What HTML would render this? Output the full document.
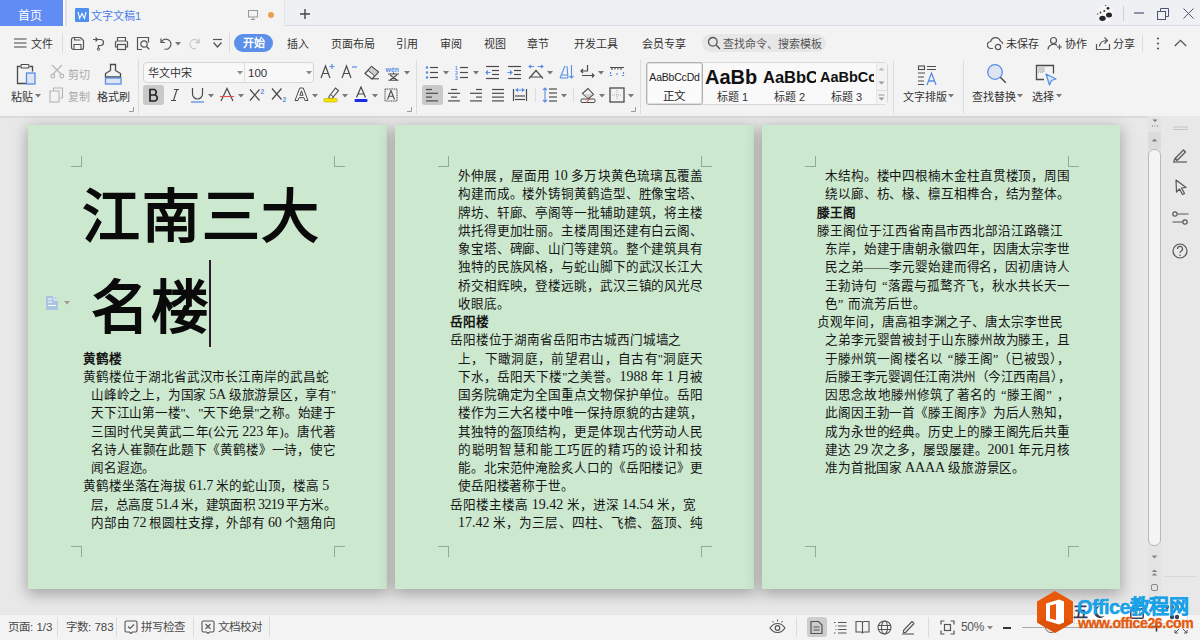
<!DOCTYPE html>
<html lang="zh-CN"><head><meta charset="utf-8">
<style>
*{box-sizing:border-box;margin:0;padding:0}
html,body{width:1200px;height:640px;overflow:hidden;background:#e6e6e6;font-family:"Liberation Sans",sans-serif;color:#333}
.a{position:absolute}
#tabbar{left:0;top:0;width:1200px;height:26px;background:#eef0f4;border-bottom:1px solid #d9dee6}
#home{left:0;top:0;width:63px;height:26px;background:#608cf4;color:#fff;font-size:12px;line-height:32px;text-align:center;padding-right:3px}
#doctab{left:66px;top:0;width:219px;height:27px;background:#f3f3f3;border-left:1px solid #dfe3ea;border-right:1px solid #dfe3ea}
#menurow{left:0;top:26px;width:1200px;height:90px;background:#f3f3f3}
.mi{font-size:11px;line-height:14px;color:#333;white-space:nowrap}
.sep{width:1px;background:#dcdcdc}
#work{left:0;top:116px;width:1148px;height:498px;background:#e8e8e8;border-top:2px solid #dadada}
.page{top:125px;width:359px;height:464px;background:#cce8cf;box-shadow:0 4px 14px 1px rgba(0,0,0,.3)}
.cm{width:11px;height:11px}
#status{left:0;top:613px;width:1200px;height:27px;background:#f3f3f3;border-top:1px solid #e2e2e2}
.st{font-size:11.5px;color:#4a4a4a;line-height:14px;white-space:nowrap}
.txt{font-family:"Liberation Serif",serif;font-size:12.5px;color:#111;white-space:nowrap;line-height:14px}
.ln{position:absolute;white-space:nowrap;text-align:justify;text-align-last:justify}
.hd{font-weight:bold;text-align:left;text-align-last:left}
/*PGCSS*/.ln{position:absolute;white-space:nowrap;text-align:justify;text-align-last:justify;font-family:"Liberation Serif",serif;font-size:12.6px;line-height:18px;height:18px;color:#161616;overflow:visible}
.lf{text-align:left;text-align-last:left}
.d{font-size:14px}
.hd{font-weight:bold;text-align:left;text-align-last:left}
.ttl{font-family:"Liberation Serif",serif;font-size:58px;line-height:72px;font-weight:bold;color:#0a0a0a;white-space:nowrap;letter-spacing:0.5px}
/*/PGCSS*/</style></head><body>

<div id="tabbar" class="a"></div>
<div id="home" class="a">首页</div>
<div class="a" style="left:63px;top:0;width:3px;height:26px;background:#fafafa;border-right:1px solid #d8dce2"></div>
<div id="doctab" class="a"></div>
<div class="a" style="left:75px;top:8px;width:14px;height:14px;background:#4f8ff2;border-radius:1px"><svg width="14" height="14" viewBox="0 0 14 14"><path d="M3 4 L4.6 10.5 L7 5.5 L9.4 10.5 L11 4" fill="none" stroke="#fff" stroke-width="1.1"/></svg></div>
<div class="a mi" style="left:91px;top:9px;color:#4a7de6;font-size:11px;line-height:14px">文字文稿1</div>
<svg class="a" style="left:248px;top:10px" width="10" height="10" viewBox="0 0 10 10"><rect x="0.5" y="0.5" width="9" height="6.5" fill="none" stroke="#999"/><path d="M5 7v2M3 9.5h4" stroke="#999"/></svg>
<div class="a" style="left:268px;top:12px;width:6px;height:6px;border-radius:50%;background:#ee9d50"></div>
<svg class="a" style="left:299px;top:8px" width="12" height="12" viewBox="0 0 12 12"><path d="M6 1v10M1 6h10" stroke="#444" stroke-width="1.4"/></svg>
<svg class="a" style="left:1095px;top:4px" width="20" height="19" viewBox="0 0 20 19"><circle cx="10" cy="10" r="8" fill="#f7f7f7"/><ellipse cx="7.5" cy="14.3" rx="3.2" ry="2.6" fill="#262626"/><ellipse cx="14" cy="11" rx="3" ry="2.5" fill="#262626"/><circle cx="13" cy="4.3" r="1.4" fill="#262626"/><circle cx="9.3" cy="7" r="1" fill="#333"/><circle cx="5.5" cy="8.5" r="0.9" fill="#333"/><circle cx="10.7" cy="1.5" r="0.7" fill="#555"/><circle cx="2.8" cy="10" r="0.8" fill="#555"/></svg>
<div class="a" style="left:1123px;top:6px;width:1px;height:15px;background:#d0d0d0"></div>
<div class="a" style="left:1134px;top:12px;width:10px;height:2px;background:#8a93a8"></div>
<svg class="a" style="left:1157px;top:8px" width="12" height="12" viewBox="0 0 12 12"><rect x="0.5" y="3.5" width="8" height="8" fill="none" stroke="#4b5673"/><path d="M3.5 3.5V0.5h8v8h-3" fill="none" stroke="#4b5673"/></svg>
<svg class="a" style="left:1183px;top:8px" width="11" height="11" viewBox="0 0 11 11"><path d="M0.5 0.5l10 10M10.5 0.5l-10 10" stroke="#4b5673" stroke-width="1"/></svg>

<div id="menurow" class="a"></div>
<!-- menu row -->
<svg class="a" style="left:14px;top:38px" width="13" height="10" viewBox="0 0 13 10"><path d="M0 1h12.5M0 5h12.5M0 9h12.5" stroke="#444" stroke-width="1.2"/></svg>
<div class="a mi" style="left:31px;top:37px">文件</div>
<div class="a sep" style="left:62px;top:33px;height:20px"></div>
<svg class="a" style="left:70px;top:36px" width="15" height="15" viewBox="0 0 15 15"><path d="M1.5 3.5a2 2 0 0 1 2-2h7l3 3v7a2 2 0 0 1-2 2h-8a2 2 0 0 1-2-2z" fill="none" stroke="#555" stroke-width="1.2"/><path d="M4 13.5v-5h7v5M4.5 1.5v2.5h6" fill="none" stroke="#555" stroke-width="1.1"/></svg>
<svg class="a" style="left:92px;top:36px" width="15" height="15" viewBox="0 0 15 15"><path d="M6 3.5h2.5a3 3 0 0 1 0 6H6.5v3" fill="none" stroke="#555" stroke-width="1.2"/><circle cx="6.5" cy="13.2" r="1.2" fill="none" stroke="#555"/><path d="M1 3.5h4M3.5 1.5l2 2-2 2" fill="none" stroke="#555" stroke-width="1.1"/></svg>
<svg class="a" style="left:114px;top:36px" width="15" height="15" viewBox="0 0 15 15"><path d="M3.5 5V1.5h8V5M3.5 11H1.5V6.5a1.5 1.5 0 0 1 1.5-1.5h9a1.5 1.5 0 0 1 1.5 1.5V11h-2" fill="none" stroke="#555" stroke-width="1.2"/><rect x="3.5" y="8.5" width="8" height="5" fill="none" stroke="#555" stroke-width="1.2"/></svg>
<svg class="a" style="left:136px;top:36px" width="15" height="15" viewBox="0 0 15 15"><path d="M6 13.5H1.5V1.5h11v5" fill="none" stroke="#555" stroke-width="1.2"/><circle cx="8" cy="8" r="3.2" fill="none" stroke="#555" stroke-width="1.2"/><path d="M10.3 10.3l3 3" stroke="#555" stroke-width="1.3"/></svg>
<svg class="a" style="left:159px;top:37px" width="14" height="13" viewBox="0 0 14 13"><path d="M2 1.5v4h4" fill="none" stroke="#555" stroke-width="1.2"/><path d="M2.3 5.2A5 5 0 1 1 5.5 12" fill="none" stroke="#555" stroke-width="1.2"/></svg>
<svg class="a" style="left:175px;top:42px" width="6" height="4" viewBox="0 0 6 4"><path d="M0 0h6L3 3.5z" fill="#777"/></svg>
<svg class="a" style="left:188px;top:37px" width="13" height="13" viewBox="0 0 14 13"><path d="M12 1.5v4H8" fill="none" stroke="#c4c4c4" stroke-width="1.2"/><path d="M11.7 5.2A5 5 0 1 0 8.5 12" fill="none" stroke="#c4c4c4" stroke-width="1.2"/></svg>
<svg class="a" style="left:212px;top:38px" width="11" height="11" viewBox="0 0 11 11"><path d="M1 1.5h9" stroke="#555" stroke-width="1.2"/><path d="M1.5 4.5L5.5 9l4-4.5" fill="none" stroke="#555" stroke-width="1.3"/></svg>
<div class="a sep" style="left:229px;top:33px;height:20px"></div>
<div class="a" style="left:234px;top:34px;width:39px;height:18px;border-radius:9px;background:#5b8fe9;color:#fff;font-size:11px;line-height:18px;text-align:center;font-weight:bold">开始</div>
<div class="a mi" style="left:287px;top:37px">插入</div>
<div class="a mi" style="left:331px;top:37px">页面布局</div>
<div class="a mi" style="left:396px;top:37px">引用</div>
<div class="a mi" style="left:440px;top:37px">审阅</div>
<div class="a mi" style="left:484px;top:37px">视图</div>
<div class="a mi" style="left:527px;top:37px">章节</div>
<div class="a mi" style="left:574px;top:37px">开发工具</div>
<div class="a mi" style="left:642px;top:37px">会员专享</div>
<div class="a" style="left:702px;top:34px;width:124px;height:18px;border-radius:9px;background:#e7e7e7"></div>
<svg class="a" style="left:707px;top:36px" width="14" height="14" viewBox="0 0 14 14"><circle cx="5.8" cy="5.8" r="4.3" fill="none" stroke="#555" stroke-width="1.3"/><path d="M9 9l4 4" stroke="#555" stroke-width="1.4"/></svg>
<div class="a mi" style="left:723px;top:37px;color:#555;font-size:11px">查找命令、搜索模板</div>
<svg class="a" style="left:987px;top:36px" width="17" height="15" viewBox="0 0 17 15"><path d="M6 12.5H4a3.5 3.5 0 0 1-.3-7A5 5 0 0 1 13.3 5a3.5 3.5 0 0 1 2.5 3" fill="none" stroke="#555" stroke-width="1.2"/><circle cx="11" cy="11" r="2.7" fill="none" stroke="#555" stroke-width="1.2"/></svg>
<div class="a mi" style="left:1006px;top:37px">未保存</div>
<svg class="a" style="left:1047px;top:36px" width="16" height="15" viewBox="0 0 16 15"><circle cx="6.5" cy="4.5" r="3" fill="none" stroke="#555" stroke-width="1.2"/><path d="M1 13.5a5.5 5.5 0 0 1 9-4" fill="none" stroke="#555" stroke-width="1.2"/><path d="M12.5 8.5v5M10 11h5" stroke="#555" stroke-width="1.2"/></svg>
<div class="a mi" style="left:1065px;top:37px">协作</div>
<svg class="a" style="left:1095px;top:36px" width="16" height="15" viewBox="0 0 16 15"><path d="M1.5 8v5.5h13V8" fill="none" stroke="#555" stroke-width="1.2"/><path d="M4.5 10.5C5 6 8 4.5 12 4.5M9.5 1.5l3 3-3 3" fill="none" stroke="#555" stroke-width="1.2"/></svg>
<div class="a mi" style="left:1113px;top:37px">分享</div>
<div class="a sep" style="left:1142px;top:35px;height:17px"></div>
<svg class="a" style="left:1156px;top:37px" width="4" height="13" viewBox="0 0 4 13"><circle cx="2" cy="1.5" r="1.1" fill="#555"/><circle cx="2" cy="6.5" r="1.1" fill="#555"/><circle cx="2" cy="11.5" r="1.1" fill="#555"/></svg>
<svg class="a" style="left:1174px;top:39px" width="13" height="8" viewBox="0 0 13 8"><path d="M0.8 7L6.5 1.3 12.2 7" fill="none" stroke="#555" stroke-width="1.3"/></svg>

<!--RIB-->
<svg class="a" style="left:15px;top:63px" width="22" height="23" viewBox="0 0 22 23"><path d="M5 3.5H2.5v17h9" fill="none" stroke="#4a4a4a" stroke-width="1.3"/><path d="M15 3.5h2.5v5" fill="none" stroke="#4a4a4a" stroke-width="1.3"/><rect x="6" y="1.5" width="8" height="3.5" rx="1" fill="none" stroke="#4a4a4a" stroke-width="1.2"/><rect x="11.5" y="10" width="8.5" height="11" fill="#dde5f3" stroke="#5a8ee6" stroke-width="1.3"/></svg>
<div class="a mi" style="left:11px;top:90px;">粘贴</div>
<svg class="a" style="left:35px;top:94px" width="6" height="4" viewBox="0 0 6 4"><path d="M0 0h6L3 3.5z" fill="#777"/></svg>
<svg class="a" style="left:50px;top:64px" width="15" height="15" viewBox="0 0 15 15"><path d="M2 1l9 9M12 1L3 10" stroke="#b5b5b5" stroke-width="1.1"/><circle cx="2.8" cy="12" r="1.9" fill="none" stroke="#b5b5b5" stroke-width="1.1"/><circle cx="11.8" cy="12" r="1.9" fill="none" stroke="#b5b5b5" stroke-width="1.1"/></svg>
<div class="a mi" style="left:68px;top:68px;color:#aaa">剪切</div>
<svg class="a" style="left:49px;top:87px" width="15" height="16" viewBox="0 0 15 16"><path d="M4.5 3.5V1h9v10H11" fill="none" stroke="#b5b5b5" stroke-width="1.1"/><rect x="1" y="4" width="9" height="11" fill="none" stroke="#b5b5b5" stroke-width="1.1"/></svg>
<div class="a mi" style="left:68px;top:90px;color:#aaa">复制</div>
<svg class="a" style="left:104px;top:63px" width="19" height="23" viewBox="0 0 19 23"><path d="M8 1.5h3.5v6l5 3v3.5h-15V10.5l5-3v-6z" fill="none" stroke="#4a4a4a" stroke-width="1.3"/><rect x="1.5" y="15" width="15.5" height="6" fill="#dde5f3" stroke="#5a8ee6" stroke-width="1.3"/></svg>
<div class="a mi" style="left:97px;top:90px;">格式刷</div>
<svg class="a" style="left:129px;top:107px" width="5" height="5" viewBox="0 0 5 5"><path d="M4.5 0v4.5H0" fill="none" stroke="#999"/></svg>
<div class="a sep" style="left:138px;top:60px;height:54px"></div>
<div class="a" style="left:143px;top:62px;width:171px;height:21px;border:1px solid #d6d6d6;border-radius:4px;background:#f8f8f8"></div>
<div class="a" style="left:244px;top:63px;width:1px;height:19px;background:#dedede"></div>
<div class="a mi" style="left:148px;top:66px;font-size:11px">华文中宋</div>
<svg class="a" style="left:237px;top:71px" width="6" height="4" viewBox="0 0 6 4"><path d="M0 0h6L3 3.5z" fill="#888"/></svg>
<div class="a mi" style="left:248px;top:66px;font-size:11.5px">100</div>
<svg class="a" style="left:306px;top:71px" width="6" height="4" viewBox="0 0 6 4"><path d="M0 0h6L3 3.5z" fill="#888"/></svg>
<svg class="a" style="left:320px;top:63px" width="15" height="16" viewBox="0 0 15 16"><path d="M1 15L5.5 3 10 15M2.8 10.5h5.5" fill="none" stroke="#4a4a4a" stroke-width="1.2"/><path d="M12 1v5M9.5 3.5h5" stroke="#5a8ee6" stroke-width="1.2"/></svg>
<svg class="a" style="left:341px;top:63px" width="17" height="16" viewBox="0 0 17 16"><path d="M1 15L5.5 3 10 15M2.8 10.5h5.5" fill="none" stroke="#4a4a4a" stroke-width="1.2"/><path d="M11 4h5" stroke="#5a8ee6" stroke-width="1.2"/></svg>
<svg class="a" style="left:363px;top:65px" width="17" height="15" viewBox="0 0 17 15"><path d="M2 8.5L8.5 1.5 15.5 7 9 14z" fill="none" stroke="#4a4a4a" stroke-width="1.2" stroke-linejoin="round"/><path d="M8.5 1.5L15.5 7 11.8 11 5 5.3z" fill="#cfcfcf" stroke="#4a4a4a" stroke-width="1"/><path d="M9 13.8h7" stroke="#4a4a4a" stroke-width="1.1"/></svg>
<svg class="a" style="left:385px;top:64px" width="17" height="17" viewBox="0 0 17 17"><text x="0.5" y="7.5" font-size="7" font-family="Liberation Sans" fill="#5a8ee6" font-weight="bold">wén</text><path d="M8.5 8.5v1.2M3 10h11M5 11l7 5M12 11l-7 5M3.5 16.3h10" fill="none" stroke="#4a4a4a" stroke-width="1.1"/></svg>
<svg class="a" style="left:404px;top:71px" width="6" height="4" viewBox="0 0 6 4"><path d="M0 0h6L3 3.5z" fill="#777"/></svg>
<div class="a" style="left:143px;top:85px;width:21px;height:20px;border-radius:3px;background:#c9c9c9"></div>
<svg class="a" style="left:148px;top:88px" width="12" height="14" viewBox="0 0 12 14"><path d="M2 1.5h4.5a3 3 0 0 1 0 5.5H2zM2 7h5.2a3.2 3.2 0 0 1 0 6H2z" fill="none" stroke="#222" stroke-width="1.7"/></svg>
<svg class="a" style="left:170px;top:88px" width="10" height="14" viewBox="0 0 10 14"><path d="M4 1.5h5M1 12.5h5M7 1.5L3.5 12.5" fill="none" stroke="#4a4a4a" stroke-width="1.1"/></svg>
<svg class="a" style="left:190px;top:87px" width="15" height="16" viewBox="0 0 15 16"><path d="M2.5 1v6a5 5 0 0 0 10 0V1" fill="none" stroke="#4a4a4a" stroke-width="1.2"/><path d="M1 15h13" stroke="#5a8ee6" stroke-width="1.3"/></svg>
<svg class="a" style="left:208px;top:94px" width="6" height="4" viewBox="0 0 6 4"><path d="M0 0h6L3 3.5z" fill="#777"/></svg>
<svg class="a" style="left:219px;top:87px" width="16" height="15" viewBox="0 0 16 15"><path d="M2 14L8 1.5 14 14" fill="none" stroke="#4a4a4a" stroke-width="1.2"/><path d="M1 9.5h14" stroke="#e05050" stroke-width="1.1"/></svg>
<svg class="a" style="left:238px;top:94px" width="6" height="4" viewBox="0 0 6 4"><path d="M0 0h6L3 3.5z" fill="#777"/></svg>
<svg class="a" style="left:249px;top:87px" width="17" height="15" viewBox="0 0 17 15"><path d="M1 2.5l9.5 11M10.5 2.5L1 13.5" stroke="#4a4a4a" stroke-width="1.2"/><text x="11.5" y="6.5" font-size="6.5" font-family="Liberation Sans" font-weight="bold" fill="#5a8ee6">2</text></svg>
<svg class="a" style="left:271px;top:87px" width="17" height="16" viewBox="0 0 17 16"><path d="M1 1.5l9.5 11M10.5 1.5L1 12.5" stroke="#4a4a4a" stroke-width="1.2"/><text x="11.5" y="15" font-size="6.5" font-family="Liberation Sans" font-weight="bold" fill="#5a8ee6">2</text></svg>
<svg class="a" style="left:294px;top:87px" width="15" height="15" viewBox="0 0 15 15"><path d="M1 13.5L5.8 1h3.4L14 13.5h-3l-1-2.8H5l-1 2.8z M5.9 8.3h3.2L7.5 3.8z" fill="#f7f7f7" fill-rule="evenodd" stroke="#4a4a4a" stroke-width="1" stroke-linejoin="round"/></svg>
<svg class="a" style="left:312px;top:94px" width="6" height="4" viewBox="0 0 6 4"><path d="M0 0h6L3 3.5z" fill="#777"/></svg>
<svg class="a" style="left:323px;top:86px" width="17" height="17" viewBox="0 0 17 17"><path d="M6 10.5l6.5-8.5 3 2.5L9 12.5H6z" fill="none" stroke="#4a4a4a" stroke-width="1.1"/><path d="M7.5 8.5l3 2.5" stroke="#4a4a4a" stroke-width="1"/><rect x="1" y="12.5" width="13" height="3.5" rx="1" fill="#f5e500" stroke="#c8b800" stroke-width="0.7"/></svg>
<svg class="a" style="left:342px;top:94px" width="6" height="4" viewBox="0 0 6 4"><path d="M0 0h6L3 3.5z" fill="#777"/></svg>
<svg class="a" style="left:354px;top:86px" width="15" height="17" viewBox="0 0 15 17"><path d="M2.5 11.5L7 1l4.5 10.5M4 8h6" fill="none" stroke="#4a4a4a" stroke-width="1.2"/><rect x="0.5" y="13" width="13" height="3" rx="1.2" fill="#1a2ae6"/></svg>
<svg class="a" style="left:372px;top:94px" width="6" height="4" viewBox="0 0 6 4"><path d="M0 0h6L3 3.5z" fill="#777"/></svg>
<svg class="a" style="left:384px;top:88px" width="14" height="14" viewBox="0 0 14 14"><rect x="1" y="1" width="12" height="12" fill="none" stroke="#4a4a4a" stroke-width="1" stroke-dasharray="1.2 0.6"/><path d="M3.5 11.5L7 2.5l3.5 9M4.7 8.3h4.6" fill="none" stroke="#4a4a4a" stroke-width="1.1"/></svg>
<svg class="a" style="left:407px;top:107px" width="5" height="5" viewBox="0 0 5 5"><path d="M4.5 0v4.5H0" fill="none" stroke="#999"/></svg>
<div class="a sep" style="left:416px;top:60px;height:54px"></div>
<svg class="a" style="left:425px;top:65px" width="15" height="15" viewBox="0 0 15 15"><circle cx="2" cy="2.5" r="1.3" fill="#5a8ee6"/><circle cx="2" cy="7.5" r="1.3" fill="#5a8ee6"/><circle cx="2" cy="12.5" r="1.3" fill="#5a8ee6"/><path d="M5 2.5h8" stroke="#4a4a4a" stroke-width="1.2"/><path d="M5 7.5h8" stroke="#4a4a4a" stroke-width="1.2"/><path d="M5 12.5h8" stroke="#4a4a4a" stroke-width="1.2"/></svg>
<svg class="a" style="left:443px;top:71px" width="6" height="4" viewBox="0 0 6 4"><path d="M0 0h6L3 3.5z" fill="#777"/></svg>
<svg class="a" style="left:455px;top:65px" width="15" height="15" viewBox="0 0 15 15"><text x="0" y="5" font-size="5" font-weight="bold" font-family="Liberation Sans" fill="#5a8ee6">1</text><text x="0" y="10" font-size="5" font-weight="bold" font-family="Liberation Sans" fill="#5a8ee6">2</text><text x="0" y="15" font-size="5" font-weight="bold" font-family="Liberation Sans" fill="#5a8ee6">3</text><path d="M5 2.5h8" stroke="#4a4a4a" stroke-width="1.2"/><path d="M5 7.5h8" stroke="#4a4a4a" stroke-width="1.2"/><path d="M5 12.5h8" stroke="#4a4a4a" stroke-width="1.2"/></svg>
<svg class="a" style="left:473px;top:71px" width="6" height="4" viewBox="0 0 6 4"><path d="M0 0h6L3 3.5z" fill="#777"/></svg>
<svg class="a" style="left:485px;top:65px" width="15" height="15" viewBox="0 0 15 15"><path d="M1 1.5h13" stroke="#4a4a4a" stroke-width="1.2"/><path d="M7 5.5h7" stroke="#4a4a4a" stroke-width="1.2"/><path d="M7 9.5h7" stroke="#4a4a4a" stroke-width="1.2"/><path d="M1 13.5h13" stroke="#4a4a4a" stroke-width="1.2"/><path d="M5.5 7.5H1M3 5.5l-2 2 2 2" fill="none" stroke="#5a8ee6" stroke-width="1.1"/></svg>
<svg class="a" style="left:507px;top:65px" width="15" height="15" viewBox="0 0 15 15"><path d="M1 1.5h13" stroke="#4a4a4a" stroke-width="1.2"/><path d="M7 5.5h7" stroke="#4a4a4a" stroke-width="1.2"/><path d="M7 9.5h7" stroke="#4a4a4a" stroke-width="1.2"/><path d="M1 13.5h13" stroke="#4a4a4a" stroke-width="1.2"/><path d="M0.5 7.5H5M3 5.5l2 2-2 2" fill="none" stroke="#5a8ee6" stroke-width="1.1"/></svg>
<svg class="a" style="left:528px;top:64px" width="16" height="16" viewBox="0 0 16 16"><path d="M1 2.5h5M3 0.8l-2 1.7 2 1.7M9.5 2.5H15M13 0.8l2 1.7-2 1.7" fill="none" stroke="#5a8ee6" stroke-width="1.1"/><path d="M1 14.5L8 6.5l7 8M3 13h10" fill="none" stroke="#4a4a4a" stroke-width="1.2"/></svg>
<svg class="a" style="left:547px;top:71px" width="6" height="4" viewBox="0 0 6 4"><path d="M0 0h6L3 3.5z" fill="#777"/></svg>
<svg class="a" style="left:558px;top:64px" width="16" height="16" viewBox="0 0 16 16"><path d="M2 14L7 2M9 2L10 14" fill="none" stroke="#5a8ee6" stroke-width="1.1"/><path d="M2 14h8M3.5 11h6" stroke="#5a8ee6" stroke-width="1.1"/><path d="M13.5 1v13M11.5 12l2 2 2-2" fill="none" stroke="#5a8ee6" stroke-width="1.1"/></svg>
<svg class="a" style="left:580px;top:64px" width="16" height="16" viewBox="0 0 16 16"><path d="M7.5 1v6H1M3 5l-2 2 2 2" fill="none" stroke="#4a4a4a" stroke-width="1.2"/><path d="M2 11.5h12M12 9.5l2 2-2 2" fill="none" stroke="#4a4a4a" stroke-width="1.2"/></svg>
<svg class="a" style="left:598px;top:71px" width="6" height="4" viewBox="0 0 6 4"><path d="M0 0h6L3 3.5z" fill="#777"/></svg>
<svg class="a" style="left:609px;top:66px" width="16" height="11" viewBox="0 0 16 11"><path d="M1 1.5h14M3 1.5v2.5M6 1.5v2M9 1.5v2M12 1.5v2.5" fill="none" stroke="#4a4a4a" stroke-width="1.1"/><path d="M1.5 6v3.5h2M14.5 6v3.5h-2M8 7v2.5" fill="none" stroke="#5a8ee6" stroke-width="1.2" stroke-dasharray="2 1"/></svg>
<div class="a" style="left:422px;top:85px;width:21px;height:20px;border-radius:3px;background:#c9c9c9"></div>
<svg class="a" style="left:425px;top:88px" width="14" height="14" viewBox="0 0 14 14"><path d="M1 1.5h6" stroke="#4a4a4a" stroke-width="1.2"/><path d="M1 5.3h12" stroke="#4a4a4a" stroke-width="1.2"/><path d="M1 9.1h6" stroke="#4a4a4a" stroke-width="1.2"/><path d="M1 12.9h12" stroke="#4a4a4a" stroke-width="1.2"/></svg>
<svg class="a" style="left:447px;top:88px" width="14" height="14" viewBox="0 0 14 14"><path d="M4 1.5h6" stroke="#4a4a4a" stroke-width="1.2"/><path d="M1 5.3h12" stroke="#4a4a4a" stroke-width="1.2"/><path d="M4 9.1h6" stroke="#4a4a4a" stroke-width="1.2"/><path d="M1 12.9h12" stroke="#4a4a4a" stroke-width="1.2"/></svg>
<svg class="a" style="left:469px;top:88px" width="14" height="14" viewBox="0 0 14 14"><path d="M7 1.5h6" stroke="#4a4a4a" stroke-width="1.2"/><path d="M1 5.3h12" stroke="#4a4a4a" stroke-width="1.2"/><path d="M7 9.1h6" stroke="#4a4a4a" stroke-width="1.2"/><path d="M1 12.9h12" stroke="#4a4a4a" stroke-width="1.2"/></svg>
<svg class="a" style="left:491px;top:88px" width="14" height="14" viewBox="0 0 14 14"><path d="M1 1.5h12" stroke="#4a4a4a" stroke-width="1.2"/><path d="M1 5.3h12" stroke="#4a4a4a" stroke-width="1.2"/><path d="M1 9.1h12" stroke="#4a4a4a" stroke-width="1.2"/><path d="M1 12.9h12" stroke="#4a4a4a" stroke-width="1.2"/></svg>
<svg class="a" style="left:512px;top:87px" width="16" height="15" viewBox="0 0 16 15"><path d="M1.5 2v12M14.5 2v12" stroke="#4a4a4a" stroke-width="1.2"/><path d="M4 3h8M6 1.5L4 3l2 1.5M10 1.5L12 3l-2 1.5" fill="none" stroke="#5a8ee6" stroke-width="1.1"/><path d="M3 9h10" stroke="#4a4a4a" stroke-width="1.2"/><path d="M3 12.5h10" stroke="#4a4a4a" stroke-width="1.2"/></svg>
<div class="a sep" style="left:535px;top:88px;height:14px"></div>
<svg class="a" style="left:542px;top:87px" width="16" height="16" viewBox="0 0 16 16"><path d="M3 1v14M1 3l2-2 2 2M1 13l2 2 2-2" fill="none" stroke="#5a8ee6" stroke-width="1.1"/><path d="M7 2h8" stroke="#4a4a4a" stroke-width="1.2"/><path d="M7 6h8" stroke="#4a4a4a" stroke-width="1.2"/><path d="M7 10h8" stroke="#4a4a4a" stroke-width="1.2"/><path d="M7 14h8" stroke="#4a4a4a" stroke-width="1.2"/></svg>
<svg class="a" style="left:561px;top:94px" width="6" height="4" viewBox="0 0 6 4"><path d="M0 0h6L3 3.5z" fill="#777"/></svg>
<div class="a sep" style="left:573px;top:88px;height:14px"></div>
<svg class="a" style="left:580px;top:87px" width="17" height="16" viewBox="0 0 17 16"><path d="M2.5 6.5L8 1.5l5.5 6-5 4-5-4z" fill="none" stroke="#4a4a4a" stroke-width="1.1"/><path d="M3 7l5 4 5-4z" fill="#cfcfcf"/><rect x="1" y="12" width="14" height="3.5" rx="1" fill="none" stroke="#4a4a4a" stroke-width="1"/><path d="M6 16l4-5" stroke="#e04040" stroke-width="1"/></svg>
<svg class="a" style="left:599px;top:94px" width="6" height="4" viewBox="0 0 6 4"><path d="M0 0h6L3 3.5z" fill="#777"/></svg>
<svg class="a" style="left:609px;top:87px" width="16" height="16" viewBox="0 0 16 16"><rect x="1" y="1" width="14" height="14" fill="none" stroke="#4a4a4a" stroke-width="1.3"/><path d="M8 3v10M3 8h10" stroke="#999" stroke-width="0.8" stroke-dasharray="1 1"/></svg>
<svg class="a" style="left:628px;top:94px" width="6" height="4" viewBox="0 0 6 4"><path d="M0 0h6L3 3.5z" fill="#777"/></svg>
<svg class="a" style="left:631px;top:107px" width="5" height="5" viewBox="0 0 5 5"><path d="M4.5 0v4.5H0" fill="none" stroke="#999"/></svg>
<div class="a sep" style="left:640px;top:60px;height:54px"></div>
<div class="a" style="left:646px;top:62px;width:242px;height:43px;border:1px solid #d8d8d8;border-radius:4px;background:#f9f9f9"></div>
<div class="a" style="left:646px;top:62px;width:57px;height:43px;border:1px solid #b0b0b0;border-radius:3px;background:#fbfbfb;box-shadow:inset 0 0 0 1px #e0e0e0"></div>
<div class="a" style="left:876px;top:63px;width:11px;height:41px;background:#f3f3f3;border-left:1px solid #e6e6e6"></div>
<svg class="a" style="left:878px;top:67px" width="7" height="4" viewBox="0 0 7 4"><path d="M0.5 3.5L3.5 0.5 6.5 3.5z" fill="#bbb"/></svg>
<svg class="a" style="left:878px;top:81px" width="7" height="4" viewBox="0 0 7 4"><path d="M0.5 0.5L3.5 3.5 6.5 0.5z" fill="#999"/></svg>
<svg class="a" style="left:878px;top:94px" width="7" height="8" viewBox="0 0 7 8"><path d="M0.5 1h6" stroke="#999"/><path d="M0.5 3.5L3.5 6.5 6.5 3.5z" fill="#999"/></svg>
<div class="a" style="left:877px;top:90px;width:10px;height:1px;background:#e0e0e0"></div>
<div class="a" style="left:647px;top:70px;width:55px;text-align:center;font-size:10.5px;line-height:14px;color:#222;white-space:nowrap;letter-spacing:-0.2px">AaBbCcDd</div>
<div class="a mi" style="left:663px;top:89px;font-size:11.5px;color:#222">正文</div>
<div class="a" style="left:705px;top:65px;width:56px;overflow:hidden;font-size:20px;line-height:24px;font-weight:bold;color:#111;white-space:nowrap">AaBb</div>
<div class="a" style="left:763px;top:67px;width:53px;overflow:hidden;font-size:16.5px;line-height:20px;font-weight:bold;color:#111;white-space:nowrap">AaBbC</div>
<div class="a" style="left:820px;top:68px;width:54px;overflow:hidden;font-size:14.5px;line-height:18px;font-weight:bold;color:#111;white-space:nowrap">AaBbCc</div>
<div class="a mi" style="left:717px;top:90px;color:#333">标题 1</div>
<div class="a mi" style="left:774px;top:90px;color:#333">标题 2</div>
<div class="a mi" style="left:831px;top:90px;color:#333">标题 3</div>
<div class="a sep" style="left:893px;top:60px;height:54px"></div>
<svg class="a" style="left:917px;top:64px" width="21" height="22" viewBox="0 0 21 22"><rect x="1.5" y="2" width="6" height="3.5" fill="none" stroke="#4a4a4a" stroke-width="1.1"/><path d="M10 2.5h9M10 5.5h9M1 9h7M1 13h6M1 17h6M1 20.5h6" stroke="#4a4a4a" stroke-width="1.1"/><path d="M10 21l4.5-12 4.5 12M11.5 17h6" fill="none" stroke="#5a8ee6" stroke-width="1.3"/></svg>
<div class="a mi" style="left:903px;top:90px;">文字排版</div>
<svg class="a" style="left:948px;top:94px" width="6" height="4" viewBox="0 0 6 4"><path d="M0 0h6L3 3.5z" fill="#777"/></svg>
<div class="a sep" style="left:963px;top:60px;height:54px"></div>
<svg class="a" style="left:986px;top:63px" width="22" height="23" viewBox="0 0 22 23"><circle cx="9" cy="9" r="7.3" fill="#dde5f3" stroke="#5a8ee6" stroke-width="1.3"/><path d="M14.3 14.3l5.5 5.5" stroke="#4a4a4a" stroke-width="1.5"/></svg>
<div class="a mi" style="left:972px;top:90px;">查找替换</div>
<svg class="a" style="left:1017px;top:94px" width="6" height="4" viewBox="0 0 6 4"><path d="M0 0h6L3 3.5z" fill="#777"/></svg>
<svg class="a" style="left:1035px;top:64px" width="23" height="22" viewBox="0 0 23 22"><path d="M9 15.5H1.5V1.5h17v8" fill="none" stroke="#4a4a4a" stroke-width="1.3"/><rect x="3" y="3" width="6" height="5" fill="#cfcfcf"/><path d="M3 8.5h6M9 3v5.5" stroke="#999" stroke-width="0.8" stroke-dasharray="1 1"/><path d="M11 10l10 5-4.5 1.5-2 4.5z" fill="#dde5f3" stroke="#5a8ee6" stroke-width="1.3" stroke-linejoin="round"/></svg>
<div class="a mi" style="left:1032px;top:90px;">选择</div>
<svg class="a" style="left:1056px;top:94px" width="6" height="4" viewBox="0 0 6 4"><path d="M0 0h6L3 3.5z" fill="#777"/></svg>
<!--/RIB-->
<div id="work" class="a"></div>
<div class="page a" style="left:28px"></div>
<div class="page a" style="left:395px"></div>
<div class="page a" style="left:762px;width:358px"></div>
<!--PG-->
<div class="a" style="left:71px;top:166px;width:11px;height:1px;background:#97a89a"></div>
<div class="a" style="left:81px;top:156px;width:1px;height:11px;background:#97a89a"></div>
<div class="a" style="left:334px;top:166px;width:11px;height:1px;background:#97a89a"></div>
<div class="a" style="left:334px;top:156px;width:1px;height:11px;background:#97a89a"></div>
<div class="a" style="left:71px;top:546px;width:11px;height:1px;background:#97a89a"></div>
<div class="a" style="left:81px;top:546px;width:1px;height:11px;background:#97a89a"></div>
<div class="a" style="left:334px;top:546px;width:11px;height:1px;background:#97a89a"></div>
<div class="a" style="left:334px;top:546px;width:1px;height:11px;background:#97a89a"></div>
<div class="a" style="left:438px;top:166px;width:11px;height:1px;background:#97a89a"></div>
<div class="a" style="left:448px;top:156px;width:1px;height:11px;background:#97a89a"></div>
<div class="a" style="left:701px;top:166px;width:11px;height:1px;background:#97a89a"></div>
<div class="a" style="left:701px;top:156px;width:1px;height:11px;background:#97a89a"></div>
<div class="a" style="left:438px;top:546px;width:11px;height:1px;background:#97a89a"></div>
<div class="a" style="left:448px;top:546px;width:1px;height:11px;background:#97a89a"></div>
<div class="a" style="left:701px;top:546px;width:11px;height:1px;background:#97a89a"></div>
<div class="a" style="left:701px;top:546px;width:1px;height:11px;background:#97a89a"></div>
<div class="a" style="left:805px;top:166px;width:11px;height:1px;background:#97a89a"></div>
<div class="a" style="left:815px;top:156px;width:1px;height:11px;background:#97a89a"></div>
<div class="a" style="left:1068px;top:166px;width:11px;height:1px;background:#97a89a"></div>
<div class="a" style="left:1068px;top:156px;width:1px;height:11px;background:#97a89a"></div>
<div class="a" style="left:805px;top:546px;width:11px;height:1px;background:#97a89a"></div>
<div class="a" style="left:815px;top:546px;width:1px;height:11px;background:#97a89a"></div>
<div class="a" style="left:1068px;top:546px;width:11px;height:1px;background:#97a89a"></div>
<div class="a" style="left:1068px;top:546px;width:1px;height:11px;background:#97a89a"></div>
<div class="ln hd" style="left:83px;top:349.60px;width:246px;">黄鹤楼</div>
<div class="ln" style="left:83px;top:367.86px;width:246px;letter-spacing:-0.083px;">黄鹤楼位于湖北省武汉市长江南岸的武昌蛇</div>
<div class="ln" style="left:91px;top:386.12px;width:245px;letter-spacing:-0.242px;">山峰岭之上，为国家 <span class="d">5A</span> 级旅游景区，享有"</div>
<div class="ln" style="left:91px;top:404.38px;width:245px;letter-spacing:-0.247px;">天下江山第一楼"、"天下绝景"之称。始建于</div>
<div class="ln" style="left:91px;top:422.64px;width:245px;">三国时代吴黄武二年(公元 <span class="d">223</span> 年)。唐代著</div>
<div class="ln" style="left:91px;top:440.90px;width:245px;letter-spacing:-0.139px;">名诗人崔颢在此题下《黄鹤楼》一诗，使它</div>
<div class="ln lf" style="left:91px;top:459.16px;width:245px;letter-spacing:-0.15px;">闻名遐迩。</div>
<div class="ln" style="left:83px;top:477.42px;width:246px;letter-spacing:-0.150px;">黄鹤楼坐落在海拔 <span class="d">61.7</span> 米的蛇山顶，楼高 <span class="d">5</span></div>
<div class="ln" style="left:91px;top:495.68px;width:245px;letter-spacing:-0.600px;">层，总高度 <span class="d">51.4</span> 米，建筑面积 <span class="d">3219</span> 平方米。</div>
<div class="ln" style="left:91px;top:513.94px;width:245px;letter-spacing:-0.179px;">内部由 <span class="d">72</span> 根圆柱支撑，外部有 <span class="d">60</span> 个翘角向</div>
<div class="ln" style="left:458px;top:167.00px;width:245px;">外伸展，屋面用 <span class="d">10</span> 多万块黄色琉璃瓦覆盖</div>
<div class="ln" style="left:458px;top:185.26px;width:245px;letter-spacing:-0.139px;">构建而成。楼外铸铜黄鹤造型、胜像宝塔、</div>
<div class="ln" style="left:458px;top:203.52px;width:245px;letter-spacing:-0.139px;">牌坊、轩廊、亭阁等一批辅助建筑，将主楼</div>
<div class="ln" style="left:458px;top:221.78px;width:245px;letter-spacing:-0.139px;">烘托得更加壮丽。主楼周围还建有白云阁、</div>
<div class="ln" style="left:458px;top:240.04px;width:245px;letter-spacing:-0.139px;">象宝塔、碑廊、山门等建筑。整个建筑具有</div>
<div class="ln" style="left:458px;top:258.30px;width:245px;letter-spacing:-0.139px;">独特的民族风格，与蛇山脚下的武汉长江大</div>
<div class="ln" style="left:458px;top:276.56px;width:245px;letter-spacing:-0.139px;">桥交相辉映，登楼远眺，武汉三镇的风光尽</div>
<div class="ln lf" style="left:458px;top:294.82px;width:245px;letter-spacing:-0.15px;">收眼底。</div>
<div class="ln hd" style="left:450px;top:313.08px;width:246px;">岳阳楼</div>
<div class="ln lf" style="left:450px;top:331.34px;width:246px;letter-spacing:-0.15px;">岳阳楼位于湖南省岳阳市古城西门城墙之</div>
<div class="ln" style="left:458px;top:349.60px;width:245px;">上，下瞰洞庭，前望君山，自古有"洞庭天</div>
<div class="ln" style="left:458px;top:367.86px;width:245px;letter-spacing:-0.005px;">下水，岳阳天下楼"之美誉。<span class="d">1988</span> 年 <span class="d">1</span> 月被</div>
<div class="ln" style="left:458px;top:386.12px;width:245px;letter-spacing:-0.139px;">国务院确定为全国重点文物保护单位。岳阳</div>
<div class="ln" style="left:458px;top:404.38px;width:245px;letter-spacing:-0.139px;">楼作为三大名楼中唯一保持原貌的古建筑，</div>
<div class="ln" style="left:458px;top:422.64px;width:245px;letter-spacing:-0.139px;">其独特的盔顶结构，更是体现古代劳动人民</div>
<div class="ln" style="left:458px;top:440.90px;width:245px;">的聪明智慧和能工巧匠的精巧的设计和技</div>
<div class="ln" style="left:458px;top:459.16px;width:245px;letter-spacing:-0.139px;">能。北宋范仲淹脍炙人口的《岳阳楼记》更</div>
<div class="ln lf" style="left:458px;top:477.42px;width:245px;letter-spacing:-0.15px;">使岳阳楼著称于世。</div>
<div class="ln" style="left:450px;top:495.68px;width:246px;">岳阳楼主楼高 <span class="d">19.42</span> 米，进深 <span class="d">14.54</span> 米，宽</div>
<div class="ln" style="left:458px;top:513.94px;width:245px;"><span class="d">17.42</span> 米，为三层、四柱、飞檐、盔顶、纯</div>
<div class="ln" style="left:825px;top:167.00px;width:245px;letter-spacing:-0.139px;">木结构。楼中四根楠木金柱直贯楼顶，周围</div>
<div class="ln" style="left:825px;top:185.26px;width:245px;letter-spacing:-0.139px;">绕以廊、枋、椽、檩互相榫合，结为整体。</div>
<div class="ln hd" style="left:817px;top:203.52px;width:246px;">滕王阁</div>
<div class="ln" style="left:817px;top:221.78px;width:246px;letter-spacing:-0.083px;">滕王阁位于江西省南昌市西北部沿江路赣江</div>
<div class="ln" style="left:825px;top:240.04px;width:245px;letter-spacing:-0.139px;">东岸，始建于唐朝永徽四年，因唐太宗李世</div>
<div class="ln" style="left:825px;top:258.30px;width:245px;letter-spacing:-0.094px;">民之弟——李元婴始建而得名，因初唐诗人</div>
<div class="ln" style="left:825px;top:276.56px;width:245px;letter-spacing:-0.005px;">王勃诗句<span style="padding-left:5px">“</span>落霞与孤鹜齐飞，秋水共长天一</div>
<div class="ln lf" style="left:825px;top:294.82px;width:245px;letter-spacing:-0.15px;">色<span style="padding-right:5px">”</span>而流芳后世。</div>
<div class="ln" style="left:817px;top:313.08px;width:246px;letter-spacing:-0.083px;">贞观年间，唐高祖李渊之子、唐太宗李世民</div>
<div class="ln" style="left:825px;top:331.34px;width:245px;letter-spacing:-0.139px;">之弟李元婴曾被封于山东滕州故为滕王，且</div>
<div class="ln" style="left:825px;top:349.60px;width:245px;">于滕州筑一阁楼名以<span style="padding-left:5px">“</span>滕王阁<span style="padding-right:5px">”</span>（已被毁），</div>
<div class="ln" style="left:825px;top:367.86px;width:245px;letter-spacing:-0.500px;">后滕王李元婴调任江南洪州（今江西南昌），</div>
<div class="ln" style="left:825px;top:386.12px;width:245px;">因思念故地滕州修筑了著名的<span style="padding-left:5px">“</span>滕王阁<span style="padding-right:5px">”</span>，</div>
<div class="ln" style="left:825px;top:404.38px;width:245px;letter-spacing:-0.139px;">此阁因王勃一首《滕王阁序》为后人熟知，</div>
<div class="ln" style="left:825px;top:422.64px;width:245px;letter-spacing:-0.139px;">成为永世的经典。历史上的滕王阁先后共重</div>
<div class="ln" style="left:825px;top:440.90px;width:245px;letter-spacing:-0.086px;">建达 <span class="d">29</span> 次之多，屡毁屡建。<span class="d">2001</span> 年元月核</div>
<div class="ln lf" style="left:825px;top:459.16px;width:245px;letter-spacing:-0.15px;">准为首批国家 <span class="d">AAAA</span> 级旅游景区。</div>
<div class="a ttl" style="left:82px;top:182px;letter-spacing:1.8px">江南三大</div>
<div class="a ttl" style="left:91px;top:273px;letter-spacing:1.5px">名楼</div>
<div class="a" style="left:209px;top:260px;width:2px;height:87px;background:#2b1d2b"></div>
<svg class="a" style="left:46px;top:296px" width="13" height="14" viewBox="0 0 13 14"><path d="M0 0h8l4 4v10H0z" fill="#a9c5e2"/><path d="M8 0v4h4" fill="none" stroke="#fff" stroke-width="0.8"/><path d="M2 3h4M2 6h4M2 9.5h8" stroke="#fff" stroke-width="1"/></svg>
<svg class="a" style="left:64px;top:301px" width="6" height="4" viewBox="0 0 6 4"><path d="M0 0h6L3 3.5z" fill="#999"/></svg>
<!--/PG-->
<!--ST-->
<div class="a" style="left:1148px;top:116px;width:13px;height:497px;background:#e4e4e4"></div>
<div class="a" style="left:1148px;top:132px;width:13px;height:17px;background:#dcdcdc"></div>
<svg class="a" style="left:1151px;top:119px" width="8" height="10" viewBox="0 0 8 10"><path d="M1.5 0.5h5L4 3z" fill="#777"/><path d="M1 7h1M3.5 7h1M6 7h1" stroke="#777" stroke-width="1.2"/></svg>
<svg class="a" style="left:1151px;top:138px" width="7" height="4" viewBox="0 0 7 4"><path d="M0.5 3.5L3.5 0.5 6.5 3.5z" fill="#888"/></svg>
<div class="a" style="left:1148px;top:149px;width:13px;height:397px;border:1px solid #b9b9b9;border-radius:6px;background:#f4f4f4"></div>
<svg class="a" style="left:1151px;top:555px" width="7" height="4" viewBox="0 0 7 4"><path d="M0.5 0.5L3.5 3.5 6.5 0.5z" fill="#888"/></svg>
<svg class="a" style="left:1151px;top:569px" width="7" height="7" viewBox="0 0 7 7"><path d="M0.5 3L3.5 0.5 6.5 3z M0.5 6.5L3.5 4 6.5 6.5z" fill="#888"/></svg>
<svg class="a" style="left:1151px;top:584px" width="7" height="7" viewBox="0 0 7 7"><rect x="0.5" y="0.5" width="6" height="6" rx="1.5" fill="none" stroke="#888"/></svg>
<div class="a" style="left:1161px;top:116px;width:39px;height:498px;background:#e8e8e8"></div>
<div class="a" style="left:1164px;top:576px;width:33px;height:1px;background:#d8d8d8"></div>
<svg class="a" style="left:1173px;top:126px" width="15" height="5" viewBox="0 0 15 5"><path d="M0 1h15M0 3.5h15" stroke="#bbb" stroke-width="0.8"/></svg>
<svg class="a" style="left:1172px;top:147px" width="16" height="16" viewBox="0 0 16 16"><path d="M3 11.5L11.5 3l2 2L5 13.5z" fill="none" stroke="#555" stroke-width="1.2" stroke-linejoin="round"/><path d="M2 14.5c0-2 1-3 2.5-3" fill="none" stroke="#555" stroke-width="1.2"/><path d="M1 15h14" stroke="#555" stroke-width="1.2"/></svg>
<svg class="a" style="left:1175px;top:179px" width="13" height="16" viewBox="0 0 13 16"><path d="M1 1l10 7.5-4.5.5 3 5.5-2 1-3-5.5L1.5 13z" fill="none" stroke="#555" stroke-width="1.2" stroke-linejoin="round"/></svg>
<svg class="a" style="left:1172px;top:211px" width="17" height="14" viewBox="0 0 17 14"><path d="M5.5 3h11M0.5 11h10" stroke="#555" stroke-width="1.2"/><circle cx="3" cy="3" r="2.2" fill="#e8e8e8" stroke="#555" stroke-width="1.2"/><circle cx="13" cy="11" r="2.2" fill="#e8e8e8" stroke="#555" stroke-width="1.2"/></svg>
<svg class="a" style="left:1172px;top:243px" width="16" height="16" viewBox="0 0 16 16"><circle cx="8" cy="8" r="7" fill="none" stroke="#555" stroke-width="1.2"/><path d="M5.5 6a2.5 2.5 0 1 1 3.5 2.2c-.8.4-1 1-1 1.8" fill="none" stroke="#555" stroke-width="1.2"/><circle cx="8" cy="12.3" r="0.8" fill="#555"/></svg>
<div class="a" style="left:0;top:614px;width:1200px;height:26px;background:#f3f3f3;border-top:1px solid #e6e6e6"></div>
<div class="a st" style="left:8px;top:620px;">页面: 1/3</div>
<div class="a sep" style="left:57px;top:617px;height:20px"></div>
<div class="a st" style="left:66px;top:620px;">字数: 783</div>
<div class="a sep" style="left:116px;top:617px;height:20px"></div>
<svg class="a" style="left:124px;top:620px" width="14" height="14" viewBox="0 0 14 14"><path d="M1 2.5a1.5 1.5 0 0 1 1.5-1.5h9a1.5 1.5 0 0 1 1.5 1.5v8a1.5 1.5 0 0 1-1.5 1.5H8.5L7 13.5 5.5 12h-3A1.5 1.5 0 0 1 1 10.5z" fill="none" stroke="#555" stroke-width="1.1"/><path d="M4 6.5l2 2 4-4" fill="none" stroke="#555" stroke-width="1.1"/></svg>
<div class="a st" style="left:141px;top:620px;">拼写检查</div>
<div class="a sep" style="left:193px;top:617px;height:20px"></div>
<svg class="a" style="left:201px;top:620px" width="14" height="14" viewBox="0 0 14 14"><path d="M1 2.5a1.5 1.5 0 0 1 1.5-1.5h9a1.5 1.5 0 0 1 1.5 1.5v8a1.5 1.5 0 0 1-1.5 1.5H8.5L7 13.5 5.5 12h-3A1.5 1.5 0 0 1 1 10.5z" fill="none" stroke="#555" stroke-width="1.1"/><path d="M4.5 4l5 5M9.5 4l-5 5" fill="none" stroke="#555" stroke-width="1.1"/></svg>
<div class="a st" style="left:218px;top:620px;">文档校对</div>
<div class="a sep" style="left:269px;top:617px;height:20px"></div>
<svg class="a" style="left:769px;top:619px" width="17" height="14" viewBox="0 0 17 14"><path d="M1 9c2-3 4.5-4.5 7.5-4.5S14 6 16 9c-2 3-4.5 4.5-7.5 4.5S3 12 1 9z" fill="none" stroke="#555" stroke-width="1.2"/><circle cx="8.5" cy="9" r="2.3" fill="none" stroke="#555" stroke-width="1.2"/><path d="M8.5 0.5v2M3.5 2l1 1.5M13.5 2l-1 1.5" stroke="#555" stroke-width="1"/></svg>
<div class="a sep" style="left:796px;top:617px;height:20px"></div>
<div class="a" style="left:807px;top:617px;width:20px;height:20px;border-radius:3px;background:#cdcdcd"></div>
<svg class="a" style="left:810px;top:620px" width="13" height="15" viewBox="0 0 13 15"><path d="M1 1.5h7.5l3.5 3.5v8.5H1z" fill="none" stroke="#555" stroke-width="1.2"/><path d="M3.5 7h6M3.5 10h6" stroke="#555" stroke-width="1.1"/></svg>
<svg class="a" style="left:833px;top:621px" width="14" height="13" viewBox="0 0 14 13"><path d="M5 1.5h8.5M5 5h8.5M5 8.5h8.5M5 12h8.5M1 1.5h1.5M2.5 5h1M2.5 8.5h1M1 12h1.5" stroke="#555" stroke-width="1.1"/></svg>
<svg class="a" style="left:855px;top:620px" width="15" height="15" viewBox="0 0 15 15"><path d="M1 1.5h5a1.5 1.5 0 0 1 1.5 1.5v10.5A1.5 1.5 0 0 0 6 12H1zM14 1.5H9A1.5 1.5 0 0 0 7.5 3v10.5A1.5 1.5 0 0 1 9 12h5z" fill="none" stroke="#555" stroke-width="1.1"/></svg>
<svg class="a" style="left:877px;top:620px" width="15" height="15" viewBox="0 0 15 15"><circle cx="7.5" cy="7.5" r="6.5" fill="none" stroke="#555" stroke-width="1.1"/><ellipse cx="7.5" cy="7.5" rx="3" ry="6.5" fill="none" stroke="#555" stroke-width="1.1"/><path d="M1 5.5h13M1 9.5h13" stroke="#555" stroke-width="1.1"/></svg>
<svg class="a" style="left:900px;top:619px" width="16" height="16" viewBox="0 0 16 16"><path d="M3.5 11.5L12 2.5l2 2-8.5 9H3.5z" fill="none" stroke="#555" stroke-width="1.1" stroke-linejoin="round"/><path d="M2 15h12" stroke="#555" stroke-width="1.1"/></svg>
<div class="a sep" style="left:928px;top:617px;height:20px"></div>
<svg class="a" style="left:940px;top:620px" width="15" height="15" viewBox="0 0 15 15"><path d="M1 4.5V1h3.5M10.5 1H14v3.5M14 10.5V14h-3.5M4.5 14H1v-3.5" fill="none" stroke="#555" stroke-width="1.2"/><rect x="4.5" y="4.5" width="6" height="6" fill="none" stroke="#555" stroke-width="1.2"/></svg>
<div class="a st" style="left:961px;top:620px;font-size:12px;color:#555;letter-spacing:-0.3px">50%</div>
<svg class="a" style="left:987px;top:626px" width="6" height="4" viewBox="0 0 6 4"><path d="M0 0h6L3 3.5z" fill="#888"/></svg>
<div class="a" style="left:1003px;top:627px;width:8px;height:2px;background:#334"></div>
<div class="a" style="left:1022px;top:627px;width:125px;height:1px;background:#aaa"></div>
<div class="a" style="left:1045px;top:621px;width:12px;height:12px;border-radius:50%;border:1px solid #666;background:#f3f3f3"></div>
<svg class="a" style="left:1151px;top:621px" width="11" height="11" viewBox="0 0 11 11"><path d="M5.5 0.5v10M0.5 5.5h10" stroke="#334" stroke-width="1.6"/></svg>
<svg class="a" style="left:1174px;top:624px" width="14" height="10" viewBox="0 0 14 10"><path d="M1 9l4-4M1 9V6M1 9h3M13 9L9 5M13 9V6M13 9h-3" fill="none" stroke="#555" stroke-width="1"/></svg>
<div class="a" style="left:1074px;top:603px;width:114px;height:21px;background:rgba(255,255,255,.85);border:1px solid #dde"></div>
<div class="a" style="left:1073px;top:604px;font-size:15px;line-height:16px;color:#3a3f55;white-space:nowrap;font-weight:bold">五</div>
<svg class="a" style="left:1093px;top:605px" width="12" height="14" viewBox="0 0 12 14"><path d="M7 1a6 6 0 1 0 4.5 10A5 5 0 0 1 7 1z" fill="#3a3f55"/></svg>
<svg class="a" style="left:1130px;top:608px" width="14" height="11" viewBox="0 0 14 11"><rect x="0.8" y="0.8" width="12.4" height="9.4" rx="1" fill="none" stroke="#3a3f55" stroke-width="1.5"/><path d="M3 4h1M6 4h1M9 4h1M4 7h6" stroke="#3a3f55" stroke-width="1.2"/></svg>
<svg class="a" style="left:1163px;top:604px" width="16" height="16" viewBox="0 0 16 16"><circle cx="4" cy="3" r="2" fill="#3a3f55"/><circle cx="9" cy="3" r="2" fill="#3a3f55"/><circle cx="14" cy="3" r="2" fill="#3a3f55"/><circle cx="9" cy="13" r="2.2" fill="#3a3f55"/><circle cx="14" cy="13" r="2.2" fill="#3a3f55"/></svg>
<svg class="a" style="left:1036px;top:590px" width="38" height="44" viewBox="0 0 38 44"><path d="M19 1L37 11.5V32.5L19 43 1 32.5V11.5z" fill="#e8590c"/><path d="M19 22L37 32.5 19 43 1 32.5z" fill="#d44a06" opacity=".55"/><path d="M10 13.5L23 9.5V34.5L10 30.5z" fill="#fff"/><path d="M14 15.5l6-1.5v16l-6-1.5z" fill="#e8590c"/><path d="M23 9.5l5 2v21l-5 2z" fill="#fff"/></svg>
<div class="a" style="left:1077px;top:595px;font-family:'Liberation Sans',sans-serif;font-size:20px;line-height:24px;font-weight:bold;color:#1ba1e6;white-space:nowrap;letter-spacing:-0.6px;-webkit-text-stroke:0.5px #1ba1e6">Office教程网</div>
<div class="a" style="left:1078px;top:615px;font-family:'Liberation Sans',sans-serif;font-size:14px;line-height:16px;font-weight:bold;color:#e55a0b;white-space:nowrap;letter-spacing:-0.4px;-webkit-text-stroke:0.3px #e55a0b">www.office26.com</div>
<!--/ST-->
</body></html>
